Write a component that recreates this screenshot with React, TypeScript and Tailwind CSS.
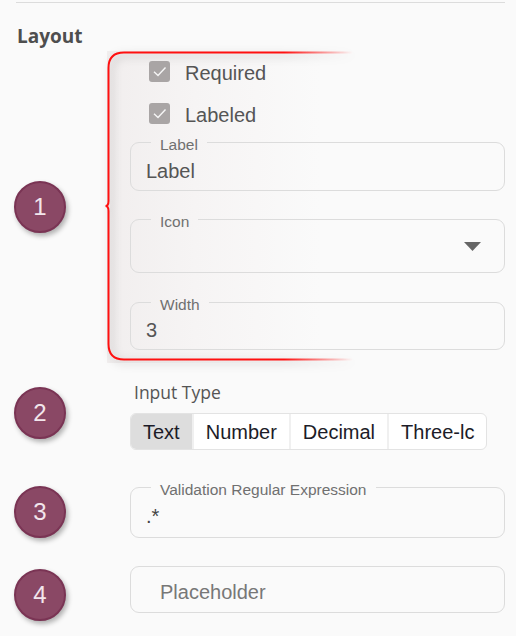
import React from "react";

function Circle({ n, className }: { n: number; className: string }) {
  return (
    <div
      className={
        "w-[52px] h-[52px] shrink-0 rounded-full bg-[#8a4865] border-2 border-[#7a3454] flex items-center justify-center text-[24px] leading-none text-[#f2e6ec] shadow-[2px_3px_5px_rgba(0,0,0,0.3)] " +
        className
      }
    >
      {n}
    </div>
  );
}

function CheckRow({ label, className }: { label: string; className?: string }) {
  return (
    <div className={"flex items-center h-[21px] ml-[19px] " + (className || "")}>
      <div className="w-[21px] h-[21px] rounded-[3px] bg-[#a9a5a5] flex items-center justify-center">
        <svg width="17" height="17" viewBox="0 0 17 17">
          <polyline points="3,8.8 7,12.5 14.5,4.5" fill="none" stroke="#f6f6f6" strokeWidth="1.4" />
        </svg>
      </div>
      <span className="ml-[15px] text-[20px] leading-[24px] text-[#555] translate-y-[1px]">{label}</span>
    </div>
  );
}

function Field({
  label,
  children,
  className,
}: {
  label: string;
  children: React.ReactNode;
  className?: string;
}) {
  return (
    <fieldset className={"border border-[#dcdcdc] rounded-[9px] min-w-0 " + (className || "")}>
      <legend className="ml-[20px] px-[9px] h-[16px] text-[15.5px] leading-[16px] text-[#707070]">
        <span className="relative top-[3px]">{label}</span>
      </legend>
      {children}
    </fieldset>
  );
}

export default function App() {
  return (
    <div
      className="w-[516px] h-[636px] bg-[#fafafa] overflow-hidden text-[#555]"
      style={{ fontFamily: '"Liberation Sans", Arial, sans-serif' }}
    >
      <div className="ml-4 mr-[11px] mt-[2px] h-px bg-[#dcdcdc]" />
      <h2
        className="ml-[17px] mt-[21px] text-[19px] leading-[24px] font-bold text-[#4e4e4e]"
        style={{ fontFamily: '"Open Sans", sans-serif' }}
      >
        Layout
      </h2>

      {/* Row 1 */}
      <div className="flex pl-[14px] pr-[11px] mt-[3px]">
        <Circle n={1} className="self-center" />
        <div className="relative ml-[41px] flex-1 pl-[23px] pt-[10px] pb-[13px]">
          <div className="absolute left-0 top-0 w-[250px] h-full bg-[linear-gradient(to_right,#f1eeee,#f6f4f4_35%,rgba(250,250,250,0)_85%)]" />
          <svg
            className="absolute left-0 top-0 overflow-visible pointer-events-none drop-shadow-[3px_3px_4px_rgba(0,0,0,0.25)]"
            width="250"
            height="310"
          >
            <defs>
              <linearGradient id="fade" gradientUnits="userSpaceOnUse" x1="0" y1="0" x2="246" y2="0">
                <stop offset="0" stopColor="#ff1010" />
                <stop offset="0.72" stopColor="#ff1010" />
                <stop offset="1" stopColor="#ff1010" stopOpacity="0" />
              </linearGradient>
            </defs>
            <path
              d="M 246 1.5 H 17 Q 1.5 1.5 1.5 17 V 150 Q 1.5 155 -1.5 155 Q 1.5 155 1.5 160 V 293 Q 1.5 308.5 17 308.5 H 246"
              fill="none"
              stroke="url(#fade)"
              strokeWidth="2"
            />
          </svg>
          <div className="relative">
            <CheckRow label="Required" />
            <CheckRow label="Labeled" className="mt-[21px]" />
            <Field label="Label" className="mt-[10px]">
              <div className="pl-[15px] pt-[9px] pb-[7px] text-[20px] leading-[24px] text-[#555]">Label</div>
            </Field>
            <Field label="Icon" className="mt-[20px]">
              <div className="h-[45px] flex justify-end pr-[23px] pt-[15px]">
                <svg width="17" height="9" viewBox="0 0 17 9">
                  <polygon points="0,0 17,0 8.5,9" fill="#666" />
                </svg>
              </div>
            </Field>
            <Field label="Width" className="mt-[21px]">
              <div className="pl-[15px] pt-[8px] pb-[7px] text-[20px] leading-[24px] text-[#555]">3</div>
            </Field>
          </div>
        </div>
      </div>

      {/* Row 2 */}
      <div className="flex pl-[14px] pr-[11px] mt-[17px]">
        <Circle n={2} className="mt-[7px]" />
        <div className="ml-[64px] flex-1">
          <div
            className="pl-[4px] text-[17.5px] leading-[24px] text-[#555]"
            style={{ fontFamily: '"Open Sans", sans-serif' }}
          >
            Input Type
          </div>
          <div className="mt-[9px] inline-flex h-[37px] border border-[#e3e3e3] rounded-[6px] overflow-hidden bg-white text-[20px] text-[#1c1c28]">
            <div className="px-[12px] flex items-center bg-[#dddddd]">Text</div>
            <div className="px-[12px] flex items-center border-l-2 border-[#f0f0f0]">Number</div>
            <div className="px-[12px] flex items-center border-l-2 border-[#f0f0f0]">Decimal</div>
            <div className="px-[12px] flex items-center border-l-2 border-[#f0f0f0]">Three-lc</div>
          </div>
        </div>
      </div>

      {/* Row 3 */}
      <div className="flex pl-[14px] pr-[11px] mt-[29px]">
        <Circle n={3} className="mt-[7px]" />
        <div className="ml-[64px] flex-1">
          <Field label="Validation Regular Expression">
            <div className="pl-[15px] pt-[9px] pb-[9px] text-[20px] leading-[24px] text-[#444]">.*</div>
          </Field>
        </div>
      </div>

      {/* Row 4 */}
      <div className="flex pl-[14px] pr-[11px] mt-[28px]">
        <Circle n={4} className="mt-[3px]" />
        <div className="ml-[64px] flex-1">
          <div className="h-[47px] border border-[#dcdcdc] rounded-[9px] pl-[29px] pt-[13px] text-[20px] leading-[24px] text-[#777]">
            Placeholder
          </div>
        </div>
      </div>
    </div>
  );
}
